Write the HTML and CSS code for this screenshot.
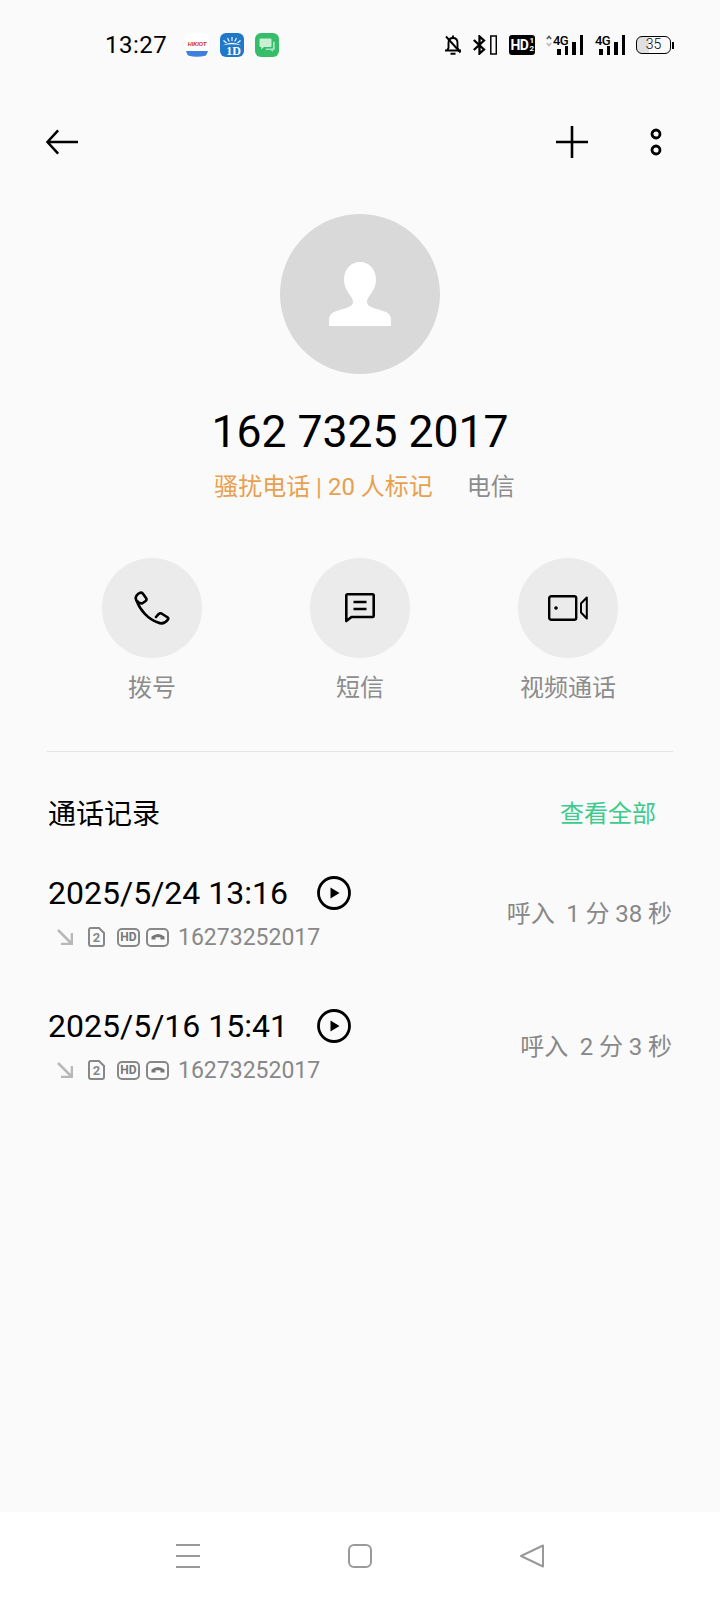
FILE: index.html
```html
<!DOCTYPE html>
<html lang="zh-CN">
<head>
  <meta charset="UTF-8">
  <meta name="viewport" content="width=device-width, initial-scale=1.0">
  <title>通话详情</title>
  <link rel="stylesheet" href="styles.css">
</head>
<body>

<!-- 状态栏 -->
<header class="status">
  <span class="status-time">13:27</span>
  <div class="status-apps">
    <svg class="app" viewBox="0 0 24 24">
      <rect width="24" height="24" rx="6" fill="#fff"/>
      <text x="12" y="13" text-anchor="middle" class="app-hik">HIKIOT</text>
      <path d="M1 18.500Q1 18 2 18H22Q23 18 23 18.500L21 22.500Q12 25 3 22.500Z" fill="#3f7fe0"/>
    </svg>
    <svg class="app" viewBox="0 0 24 24">
      <rect width="24" height="24" rx="6" fill="#1f78c8"/>
      <path d="M2.500 12.500Q12 7 21.500 12.500Q12 10 2.500 12.500Z" fill="#fff"/>
      <path d="M12 4V8M7.500 5L9.300 8.500M16.500 5L14.700 8.500M3.500 7.500L6.500 10M20.500 7.500L17.500 10" stroke="#fff" stroke-width="1.100"/>
      <text x="13.500" y="22" text-anchor="middle" class="app-d">1D</text>
    </svg>
    <svg class="app" viewBox="0 0 24 24">
      <rect width="24" height="24" rx="6" fill="#35bd6a"/>
      <path d="M5.500 5.500H15.500Q16.500 5.500 16.500 6.500V13Q16.500 14 15.500 14H9L6.300 16.500V14H5.500Q4.500 14 4.500 13V6.500Q4.500 5.500 5.500 5.500Z" fill="#c9efd5"/>
      <path d="M18 8.500H18.800Q19.800 8.500 19.800 9.500V16Q19.800 17 18.800 17H18V19L15.500 17H10.500L11 15.500H16.500Q18 15.500 18 14Z" fill="#a5e3bb"/>
    </svg>
  </div>
  <div class="status-icons">
    <svg class="si-bell" viewBox="0 0 18 20" fill="none" stroke="#000" stroke-width="1.900">
      <path d="M1 15.500H17M3 15.500L4.500 13V8Q4.500 3 9 3Q13.500 3 13.500 8V13L15 15.500"/>
      <path d="M9 .5V3M6.500 18.800H11.500"/>
      <path d="M2 1.500L16.500 17.500"/>
    </svg>
    <svg class="si-bt" viewBox="0 0 24 20" fill="none" stroke="#000" stroke-width="2.300">
      <path d="M.8 5L11 14.500L6.500 18.500V1.500L11 5.500L.8 15"/>
      <rect x="17.800" y="1" width="5.500" height="18" stroke-width="1.500"/>
    </svg>
    <span class="si-hd">HD<span class="si-hd-sub"><i>1</i><i>2</i></span></span>
    <div class="si-signal si-signal-wide">
      <svg class="si-arrows" viewBox="0 0 6 12" fill="none" stroke-width="1.500">
        <path d="M.8 4L3 1.500L5.200 4" stroke="#555"/>
        <path d="M.8 8L3 10.500L5.200 8" stroke="#bbb"/>
      </svg>
      <span class="si-4g">4G</span>
      <span class="bars"><i class="b1"></i><i class="b2"></i><i class="b3"></i><i class="b4"></i></span>
    </div>
    <div class="si-signal">
      <span class="si-4g">4G</span>
      <span class="bars"><i class="b1"></i><i class="b2"></i><i class="b3"></i><i class="b4"></i></span>
    </div>
    <div class="si-battery">
      <span class="si-battery-body">35</span>
      <span class="si-battery-tip"></span>
    </div>
  </div>
</header>

<main class="content">
  <!-- 顶部操作 -->
  <nav class="toolbar">
    <svg class="tb-back" viewBox="0 0 34 26" fill="none" stroke="#000" stroke-width="2.600">
      <path d="M33 13H2M12.500 1L1.500 13L12.500 25"/>
    </svg>
    <div class="tb-right">
      <svg class="tb-plus" viewBox="0 0 32 32" stroke="#000" stroke-width="2.600">
        <path d="M0 16H32M16 0V32"/>
      </svg>
      <svg class="tb-more" viewBox="0 0 12 28" fill="none" stroke="#000" stroke-width="2.800">
        <circle cx="6" cy="6" r="4"/>
        <circle cx="6" cy="22" r="4"/>
      </svg>
    </div>
  </nav>

  <!-- 联系人 -->
  <section class="contact">
    <div class="avatar">
      <svg class="avatar-person" viewBox="0 0 62 64">
        <path fill="#fff" d="M31 0C40 0 47 7 47 18C47 29 38 34 38 40C38 46 50 47 57 50C60 51.500 62 54 62 58V64H0V58C0 54 2 51.500 5 50C12 47 24 46 24 40C24 34 15 29 15 18C15 7 22 0 31 0Z"/>
      </svg>
    </div>
    <h1 class="number">162 7325 2017</h1>
    <p class="meta"><span class="meta-warn">骚扰电话 | 20 人标记</span><span class="meta-carrier">电信</span></p>
  </section>

  <!-- 快捷操作 -->
  <section class="actions">
    <div class="action">
      <span class="action-circle">
        <svg class="ic-phone" viewBox="0 0 36 34" fill="none" stroke="#000" stroke-width="2.600" stroke-linejoin="round" stroke-linecap="round">
          <path d="M2.500 9.500C1 7 1.500 5 4 3C6 1.300 7.500 1 8.800 2.500L12 7C13 8.500 12.500 9.500 11 10.500L8 12.500C5.500 12.500 3.800 11.500 2.500 9.500Z"/>
          <path d="M2.800 10C6 19 14 28 24 31.500C27 33 31 32.500 34 28.500C34.500 27.500 34 26.500 33 26L27.500 22.500C26.500 22 25.500 22.300 24.500 23.200L22 26"/>
        </svg>
      </span>
      <span class="action-label">拨号</span>
    </div>
    <div class="action">
      <span class="action-circle">
        <svg class="ic-msg" viewBox="0 0 30 30" fill="none" stroke="#000" stroke-width="2.600">
          <path d="M1.300 28V2.500Q1.300 1.300 2.500 1.300H27.500Q28.700 1.300 28.700 2.500V23Q28.700 24 27.500 24H6.500Z" stroke-linejoin="round"/>
          <path d="M8.500 9H21.500M8.500 16H21.500"/>
        </svg>
      </span>
      <span class="action-label">短信</span>
    </div>
    <div class="action">
      <span class="action-circle">
        <svg class="ic-video" viewBox="0 0 40 26" fill="none" stroke="#000" stroke-width="2.400" stroke-linejoin="round">
          <rect x="1.200" y="1.200" width="27" height="23.600" rx="2"/>
          <circle cx="8" cy="13" r="1.800" fill="#000" stroke="none"/>
          <path d="M38.800 2.500L33 8.500V17.500L38.800 23.500Z" stroke-width="2"/>
        </svg>
      </span>
      <span class="action-label">视频通话</span>
    </div>
  </section>

  <hr class="divider">

  <!-- 通话记录 -->
  <section class="log">
    <div class="log-head">
      <h2 class="log-title">通话记录</h2>
      <span class="log-all">查看全部</span>
    </div>

    <div class="log-row">
      <div class="log-main">
        <div class="log-date">
          <span>2025/5/24 13:16</span>
          <svg class="ic-play" viewBox="0 0 34 34">
            <circle cx="17" cy="17" r="15.500" fill="none" stroke="#000" stroke-width="2.800"/>
            <path d="M13.500 11.500L22.500 17L13.500 22.500Z" fill="#000"/>
          </svg>
        </div>
        <div class="log-sub">
          <svg class="ic-in" viewBox="0 0 16 16" fill="none" stroke="#b8b8b8" stroke-width="2.600"><path d="M1 1L15 15M15 4V15H4"/></svg>
          <svg class="tag-sim" viewBox="0 0 17 20">
            <path d="M3 1H11L16 6V17Q16 19 14 19H3Q1 19 1 17V3Q1 1 3 1Z" fill="none" stroke="#888" stroke-width="2"/>
            <text x="8.500" y="15" text-anchor="middle" class="tag-sim-text">2</text>
          </svg>
          <span class="tag tag-hd">HD</span>
          <span class="tag tag-call"><svg viewBox="0 0 14 8"><path d="M.5 3.500Q7 -1.500 13.500 3.500V6.500H9.500V4.300H4.500V6.500H.5Z" fill="#777"/></svg></span>
          <span class="log-num">16273252017</span>
        </div>
      </div>
      <span class="log-dur">呼入&nbsp; 1 分 38 秒</span>
    </div>

    <div class="log-row">
      <div class="log-main">
        <div class="log-date">
          <span>2025/5/16 15:41</span>
          <svg class="ic-play" viewBox="0 0 34 34">
            <circle cx="17" cy="17" r="15.500" fill="none" stroke="#000" stroke-width="2.800"/>
            <path d="M13.500 11.500L22.500 17L13.500 22.500Z" fill="#000"/>
          </svg>
        </div>
        <div class="log-sub">
          <svg class="ic-in" viewBox="0 0 16 16" fill="none" stroke="#b8b8b8" stroke-width="2.600"><path d="M1 1L15 15M15 4V15H4"/></svg>
          <svg class="tag-sim" viewBox="0 0 17 20">
            <path d="M3 1H11L16 6V17Q16 19 14 19H3Q1 19 1 17V3Q1 1 3 1Z" fill="none" stroke="#888" stroke-width="2"/>
            <text x="8.500" y="15" text-anchor="middle" class="tag-sim-text">2</text>
          </svg>
          <span class="tag tag-hd">HD</span>
          <span class="tag tag-call"><svg viewBox="0 0 14 8"><path d="M.5 3.500Q7 -1.500 13.500 3.500V6.500H9.500V4.300H4.500V6.500H.5Z" fill="#777"/></svg></span>
          <span class="log-num">16273252017</span>
        </div>
      </div>
      <span class="log-dur">呼入&nbsp; 2 分 3 秒</span>
    </div>
  </section>
</main>

<!-- 底部导航 -->
<footer class="navbar">
  <svg class="nav-icon" viewBox="0 0 24 24" stroke="#999" stroke-width="2"><path d="M0 1H24M0 12H24M0 23H24"/></svg>
  <svg class="nav-icon" viewBox="0 0 24 24" fill="none" stroke="#999" stroke-width="2"><rect x="1" y="1" width="22" height="22" rx="5"/></svg>
  <svg class="nav-icon" viewBox="0 0 24 24" fill="none" stroke="#999" stroke-width="2" stroke-linejoin="round"><path d="M23 1.500V22.500L1 12Z"/></svg>
</footer>

</body>
</html>
```

FILE: styles.css
```css
* {
  box-sizing: border-box;
}

body {
  width: 720px;
  height: 1600px;
  margin: 0;
  display: flex;
  flex-direction: column;
  overflow: hidden;
  background-color: #fafafa;
  color: #000;
  font-family: Roboto, "Noto Sans CJK SC", sans-serif;
}

h1, h2, p {
  margin: 0;
  font-weight: 400;
}

/* 状态栏 */
.status {
  height: 88px;
  flex: none;
  display: flex;
  align-items: center;
  padding: 2px 46px 0 105px;
}

.status-time {
  width: 62px;
  font-size: 24px;
  line-height: 28px;
  letter-spacing: 0.5px;
}

.status-apps {
  display: flex;
  gap: 11px;
  margin-left: 18px;
}

.app {
  width: 24px;
  height: 24px;
}

.app-hik {
  font: italic 700 5.500px "Liberation Sans", sans-serif;
  fill: #d3232a;
}

.app-d {
  font: 700 12px "Liberation Serif", serif;
  fill: #fff;
}

.status-icons {
  margin-left: auto;
  display: flex;
  align-items: center;
}

.si-bell {
  width: 18px;
  height: 20px;
}

.si-bt {
  width: 24px;
  height: 20px;
  margin-left: 11px;
}

.si-hd {
  width: 26px;
  height: 20px;
  margin-left: 12px;
  display: flex;
  align-items: center;
  justify-content: center;
  background: #000;
  border-radius: 3px;
  color: #fff;
  font-size: 14px;
  font-weight: 700;
  letter-spacing: -0.5px;
}

.si-hd-sub {
  display: flex;
  flex-direction: column;
  margin-left: 1px;
  font-size: 8px;
  line-height: 8px;
}

.si-hd-sub i {
  font-style: normal;
}

.si-signal {
  width: 29px;
  height: 20px;
  margin-left: 12px;
  display: flex;
  align-items: flex-start;
}

.si-signal-wide {
  width: 37px;
  margin-left: 11px;
}

.si-arrows {
  width: 6px;
  height: 12px;
  margin-right: 1px;
  flex: none;
}

.si-4g {
  width: 15px;
  flex: none;
  font-size: 13px;
  line-height: 11px;
  font-weight: 500;
  letter-spacing: -0.6px;
}

.bars {
  display: flex;
  align-items: flex-end;
  gap: 4px;
  height: 20px;
  margin-left: -11px;
}

.bars i {
  width: 3.500px;
  display: block;
  background: #000;
}

.b1 { height: 6px; }
.b2 { height: 9px; }
.b3 { height: 13px; }
.b4 { height: 20px; }

.si-battery {
  margin-left: 12px;
  display: flex;
  align-items: center;
}

.si-battery-body {
  width: 35px;
  height: 18px;
  border: 1.500px solid #000;
  border-radius: 6px;
  background: linear-gradient(90deg, #e0e0e0 35%, transparent 35%);
  text-align: center;
  font-size: 14px;
  font-weight: 300;
  line-height: 15px;
}

.si-battery-tip {
  width: 2px;
  height: 7px;
  margin-left: 1px;
  background: #000;
}

/* 内容 */
.content {
  flex: 1;
}

.toolbar {
  height: 64px;
  margin-top: 22px;
  padding: 0 46px;
  display: flex;
  align-items: center;
  justify-content: space-between;
}

.tb-back {
  width: 33px;
  height: 26px;
}

.tb-right {
  display: flex;
  align-items: center;
  gap: 62px;
  margin-right: 12px;
}

.tb-plus {
  width: 32px;
  height: 32px;
}

.tb-more {
  width: 12px;
  height: 28px;
}

.contact {
  display: flex;
  flex-direction: column;
  align-items: center;
}

.avatar {
  width: 160px;
  height: 160px;
  margin-top: 40px;
  display: flex;
  align-items: center;
  justify-content: center;
  border-radius: 50%;
  background: #d9d9d9;
}

.avatar-person {
  width: 62px;
  height: 64px;
}

.number {
  margin-top: 33px;
  font-size: 44.500px;
  line-height: 50px;
}

.meta {
  margin-top: 14px;
  padding-left: 9px;
  font-size: 24px;
  line-height: 32px;
  display: flex;
  gap: 34px;
}

.meta-warn {
  color: #e8a04f;
}

.meta-carrier {
  color: #8c8c8c;
}

.actions {
  width: 624px;
  margin: 55px auto 0;
  display: grid;
  grid-template-columns: repeat(3, 1fr);
}

.action {
  display: flex;
  flex-direction: column;
  align-items: center;
  gap: 14px;
}

.action-circle {
  width: 100px;
  height: 100px;
  display: flex;
  align-items: center;
  justify-content: center;
  border-radius: 50%;
  background: #ebebeb;
}

.ic-phone { width: 36px; height: 34px; }
.ic-msg { width: 30px; height: 30px; }
.ic-video { width: 40px; height: 26px; }

.action-label {
  font-size: 24px;
  line-height: 32px;
  color: #8c8c8c;
}

.divider {
  width: 626px;
  height: 1px;
  margin: 47px 0 0 47px;
  border: 0;
  background: #e4e4e4;
}

.log {
  padding: 0 48px;
}

.log-head {
  height: 40px;
  margin-top: 40px;
  display: flex;
  align-items: center;
  justify-content: space-between;
}

.log-title {
  font-size: 28px;
}

.log-all {
  margin: 0 16px 2px 0;
  font-size: 24px;
  color: #3ccb8c;
}

.log-row {
  height: 133px;
  display: flex;
  justify-content: space-between;
  align-items: flex-start;
}

.log-head + .log-row {
  margin-top: 38px;
}

.log-date {
  height: 40px;
  margin-top: 3px;
  display: flex;
  align-items: center;
  gap: 29px;
  font-size: 32px;
}

.ic-play {
  width: 34px;
  height: 34px;
}

.log-sub {
  height: 30px;
  margin-top: 9px;
  display: flex;
  align-items: center;
  padding-left: 9px;
}

.ic-in {
  width: 16px;
  height: 16px;
}

.tag-sim {
  width: 17px;
  height: 20px;
  margin-left: 15px;
}

.tag-sim-text {
  font: 700 13px Roboto, sans-serif;
  fill: #888;
}

.tag {
  height: 19px;
  display: flex;
  align-items: center;
  justify-content: center;
  border: 2px solid #888;
  border-radius: 5px;
  color: #777;
  font-size: 12px;
  font-weight: 700;
}

.tag-hd {
  width: 23px;
  margin-left: 12px;
}

.tag-call {
  width: 23px;
  margin-left: 6px;
}

.tag-call svg {
  width: 14px;
  height: 8px;
}

.log-num {
  margin-left: 9px;
  font-size: 23px;
  color: #888;
}

.log-dur {
  margin-top: 28px;
  font-size: 24px;
  line-height: 32px;
  word-spacing: -0.2px;
  color: #888;
}

/* 底部导航 */
.navbar {
  height: 88px;
  flex: none;
  display: flex;
  align-items: center;
  justify-content: center;
  gap: 148px;
  background: #fff;
}

.nav-icon {
  width: 24px;
  height: 24px;
}
```
